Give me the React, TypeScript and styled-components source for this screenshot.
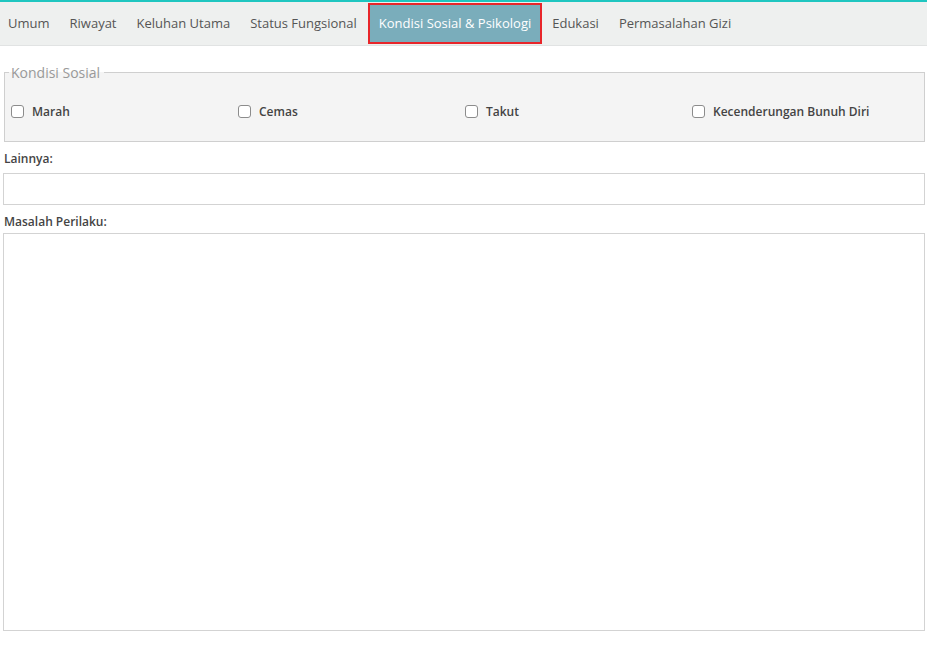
import React from "react";
import styled, { createGlobalStyle } from "styled-components";

const Global = createGlobalStyle`
  html, body { margin: 0; padding: 0; background: #fff; }
  body { font-family: "Open Sans", "Noto Sans", sans-serif; color: #333; }
  * { box-sizing: border-box; }
`;

const Page = styled.div`
  width: 927px;
  border-top: 2px solid #1fc6c0;
`;

const TabBar = styled.nav`
  display: flex;
  align-items: stretch;
  height: 44px;
  padding: 1px 0 1px 0;
  background: #eef0ef;
  border-bottom: 1px solid #e1e3e3;
`;

const Tab = styled.div<{ $active?: boolean }>`
  display: flex;
  align-items: center;
  padding: 0 ${(p) => (p.$active ? "9px" : "10px")} 2px;
  margin-left: ${(p) => (p.$active ? "1px" : "0")};
  font-size: 13px;
  color: ${(p) => (p.$active ? "#fff" : "#555")};
  background: ${(p) => (p.$active ? "#7aadbb" : "transparent")};
  border: ${(p) => (p.$active ? "2px solid #e8262a" : "none")};
  white-space: nowrap;
  &:first-child { padding-left: 8px; }
`;

const Content = styled.div`
  padding: 17px 2px 0 3px;
`;

const Fieldset = styled.fieldset`
  margin: 0 0 0 1px;
  padding: 21px 4px 0 6px;
  background: #f4f4f4;
  border: 1px solid #cfcfcf;
  height: 79px;
`;

const Legend = styled.legend`
  padding: 0 4px 0 2px;
  margin-left: -2px;
  font-size: 14px;
  color: #999;
  background: linear-gradient(to bottom, #fff 50%, transparent 50%);
`;

const CheckGrid = styled.div`
  display: grid;
  grid-template-columns: repeat(4, 227px);
`;

const CheckLabel = styled.label`
  display: flex;
  align-items: center;
  gap: 8px;
  font-size: 12px;
  font-weight: 600;
  color: #444;
`;

const Box = styled.span`
  width: 13px;
  height: 13px;
  border: 1px solid #8c8c8c;
  border-radius: 3px;
  background: #fff;
`;

const FieldLabel = styled.div<{ $gap: number }>`
  margin: 8px 0 ${(p) => p.$gap}px 1px;
  font-size: 12px;
  font-weight: 600;
  color: #444;
`;

const Input = styled.div`
  height: 32px;
  border: 1px solid #d3d3d3;
  background: #fff;
`;

const TextArea = styled.div`
  height: 398px;
  border: 1px solid #d3d3d3;
  background: #fff;
`;

const tabs = [
  "Umum",
  "Riwayat",
  "Keluhan Utama",
  "Status Fungsional",
  "Kondisi Sosial & Psikologi",
  "Edukasi",
  "Permasalahan Gizi",
];

const checks = ["Marah", "Cemas", "Takut", "Kecenderungan Bunuh Diri"];

export default function App() {
  return (
    <Page>
      <Global />
      <TabBar>
        {tabs.map((t) => (
          <Tab key={t} $active={t === "Kondisi Sosial & Psikologi"}>
            {t}
          </Tab>
        ))}
      </TabBar>
      <Content>
        <Fieldset>
          <Legend>Kondisi Sosial</Legend>
          <CheckGrid>
            {checks.map((c) => (
              <CheckLabel key={c}>
                <Box />
                {c}
              </CheckLabel>
            ))}
          </CheckGrid>
        </Fieldset>
        <FieldLabel $gap={6}>Lainnya:</FieldLabel>
        <Input />
        <FieldLabel $gap={3}>Masalah Perilaku:</FieldLabel>
        <TextArea />
      </Content>
    </Page>
  );
}
